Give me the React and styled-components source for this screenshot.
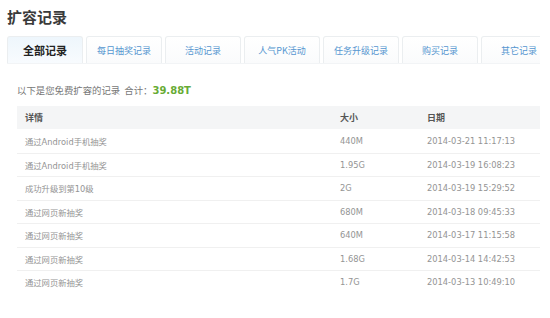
import React from "react";
import styled, { createGlobalStyle } from "styled-components";

const GlobalStyle = createGlobalStyle`
    html, body {
        margin: 0;
        padding: 0;
        background: #ffffff;
    }

    body {
        font-family: "DejaVu Sans", "Noto Sans CJK SC", sans-serif;
    }
`

const Page = styled.div`
    width: 550px;
    height: 318px;
    box-sizing: border-box;
    padding: 8px 10px 0 7px;
    overflow: hidden;
`

const Title = styled.h1`
    margin: 0 0 10px;
    font-size: 15px;
    line-height: 18px;
    font-weight: 700;
    color: #3a3a3a;
    font-family: "Noto Sans CJK SC", sans-serif;
`

const Tabs = styled.div`
    display: flex;
    gap: 3px;
    width: 533px;
    overflow: hidden;
    height: 27px;
    border-bottom: 1px solid #f2f4f6;
`

const Tab = styled.div`
    flex: 0 0 76px;
    height: 27px;
    box-sizing: border-box;
    display: flex;
    align-items: center;
    justify-content: center;
    border: 1px solid #ebeef0;
    border-bottom: 0;
    border-radius: 3px 3px 0 0;
    background: ${p => p.$active
        ? "linear-gradient(#eef6fc, #f8fbfe)"
        : "linear-gradient(#ffffff, #fafbfc)"};
    color: ${p => p.$active ? "#222222" : "#5596d0"};
    font-family: "Noto Sans CJK SC", sans-serif;
    font-size: ${p => p.$active ? "11px" : "9px"};
    font-weight: ${p => p.$active ? 700 : 400};
`

const Content = styled.div`
    padding: 19px 0 0 10px;
`

const Summary = styled.p`
    margin: 0 0 8px;
    font-size: 9.4px;
    line-height: 14px;
    color: #777777;
    font-family: "Noto Sans CJK SC", sans-serif;

    strong {
        font-family: "DejaVu Sans", sans-serif;
        color: #67ab35;
        font-size: 10px;
        font-weight: 700;
    }
`

const Row = styled.div`
    display: grid;
    grid-template-columns: 315px 87px 1fr;
    height: ${p => p.$head ? "23px" : "23.5px"};
    align-items: center;
    box-sizing: border-box;
    padding-left: 8px;
    background: ${p => p.$head ? "#f4f5f6" : "transparent"};
    border-top: ${p => p.$first || p.$head ? "0" : "1px solid #f0f0f0"};
    font-size: ${p => p.$head ? "9px" : "8.3px"};
    color: ${p => p.$head ? "#555555" : "#949494"};
    font-weight: ${p => p.$head ? 700 : 400};
`

const records = [
    ["通过Android手机抽奖", "440M", "2014-03-21 11:17:13"],
    ["通过Android手机抽奖", "1.95G", "2014-03-19 16:08:23"],
    ["成功升级到第10级", "2G", "2014-03-19 15:29:52"],
    ["通过网页新抽奖", "680M", "2014-03-18 09:45:33"],
    ["通过网页新抽奖", "640M", "2014-03-17 11:15:58"],
    ["通过网页新抽奖", "1.68G", "2014-03-14 14:42:53"],
    ["通过网页新抽奖", "1.7G", "2014-03-13 10:49:10"]
];

const tabs = ["全部记录", "每日抽奖记录", "活动记录", "人气PK活动", "任务升级记录", "购买记录", "其它记录"];

export default function App() {
    return (
        <Page>
            <GlobalStyle />
            <Title>扩容记录</Title>
            <Tabs>
                {tabs.map((t, i) => (
                    <Tab key={t} $active={i === 0}>{t}</Tab>
                ))}
            </Tabs>
            <Content>
                <Summary>以下是您免费扩容的记录&nbsp;&nbsp;合计：<strong>39.88T</strong></Summary>
                <Row $head>
                    <span>详情</span>
                    <span>大小</span>
                    <span>日期</span>
                </Row>
                {records.map((r, i) => (
                    <Row key={i} $first={i === 0}>
                        <span>{r[0]}</span>
                        <span>{r[1]}</span>
                        <span>{r[2]}</span>
                    </Row>
                ))}
            </Content>
        </Page>
    )
}
